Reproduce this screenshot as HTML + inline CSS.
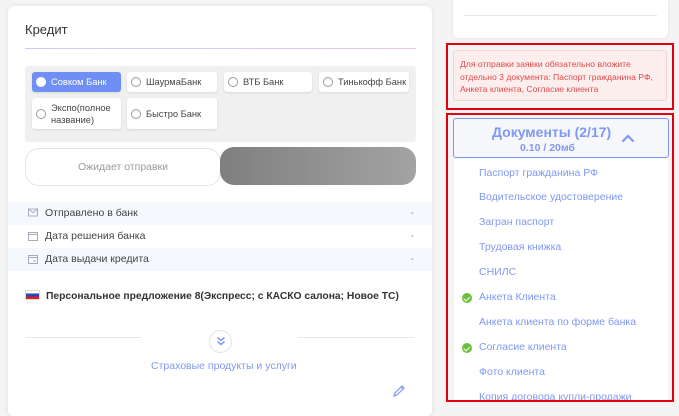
<!DOCTYPE html>
<html><head><meta charset="utf-8"><style>
*{box-sizing:border-box;margin:0;padding:0}
body{width:679px;height:404px;overflow:hidden;background:#f4f4f4;font-family:"Liberation Sans","DejaVu Sans",sans-serif;position:relative;color:#333}
.card{position:absolute;left:8px;top:6px;width:424px;height:410px;background:#fff;border-radius:6px;box-shadow:0 0 6px rgba(0,0,0,.08)}
.title{position:absolute;left:17px;top:16px;font-size:13px;color:#333}
.line{position:absolute;left:17px;top:42px;width:391px;height:1px;background:linear-gradient(90deg,#c8ccf8,#f0c8ef)}
.banks{position:absolute;left:17px;top:60px;width:391px;height:76px;background:#f0f0f0;border-radius:3px}
.b{position:absolute;height:20px;width:89px;background:#fff;border-radius:3px;box-shadow:0 1px 2px rgba(0,0,0,.1);font-size:9.3px;color:#444;display:flex;align-items:center;padding-left:4px;white-space:nowrap}
.b i{width:10px;height:10px;border:1px solid #999;border-radius:50%;margin-right:5px;flex:none;background:#fff}
.b.sel{background:#6f8ff5;color:#fff}.b.sel i{border-color:#fff}
.wait{position:absolute;left:17px;top:142px;width:196px;height:38px;border:1px solid #e4e4e4;border-radius:14px;font-size:10.5px;color:#9a9a9a;text-align:center;line-height:36px}
.grey{position:absolute;left:212px;top:141px;width:196px;height:38px;border-radius:14px;background:linear-gradient(90deg,#7f7f7f,#a3a3a3)}
.row{position:absolute;left:0;width:424px;height:23px;font-size:10.5px;color:#444;line-height:23px;padding-left:37px}
.row.s{background:#f5f9fd}
.row .d{position:absolute;right:18px;top:0;color:#999}
.row svg{position:absolute;left:20px;top:6px}
.offer{position:absolute;left:17px;top:284px;font-size:10.3px;font-weight:bold;color:#333}
.flag{display:inline-block;width:15px;height:10px;vertical-align:-1px;margin-right:6px;background:linear-gradient(#fff 0 33%,#2a46b0 33% 66%,#d32222 66%);border:1px solid #ddd}
.hr{position:absolute;top:331px;height:1px;background:#e6e6e6}
.circ{position:absolute;left:201px;top:324px;width:23px;height:23px;border:1px solid #e4e4e4;border-radius:50%;background:#fff}
.ins{position:absolute;left:143px;top:354px;font-size:10.5px;color:#7f98f3}
.top{position:absolute;left:453px;top:-6px;width:215px;height:44px;background:#fff;border-radius:6px;box-shadow:0 0 5px rgba(0,0,0,.08)}
.red1{position:absolute;left:446px;top:43px;width:228px;height:67px;border:2px solid #e0000e;background:#f4f4f4}
.warn{position:absolute;left:5px;top:5px;width:214px;height:51px;background:#fdeeee;border:1px solid #f6d4d4;border-radius:3px;font-size:8.6px;color:#e04a4a;line-height:12.5px;padding:7px 0 0 6px;white-space:nowrap}
.red2{position:absolute;left:446px;top:113px;width:228px;height:289px;border:2px solid #e0000e;background:#f4f4f4;overflow:hidden}
.dochead{position:absolute;left:5px;top:3px;width:216px;height:40px;border:1px solid #7f98f3;border-radius:3px;background:#f6f7fb;color:#7f98f3;font-weight:bold}
.list{position:absolute;left:6px;top:44px;width:214px;height:260px;background:#fff}
.it{position:absolute;left:25px;font-size:10.5px;color:#7f98f3;white-space:nowrap}
.ck{position:absolute;left:8px;width:10px;height:10px;border-radius:50%;background:#6cbf3a}
.ck:after{content:"";position:absolute;left:3px;top:1.5px;width:2.5px;height:4.5px;border:solid #fff;border-width:0 1.4px 1.4px 0;transform:rotate(45deg)}
</style></head><body>
<div class="card">
<div class="title">Кредит</div><div class="line"></div>
<div class="banks">
<div class="b sel" style="left:7px;top:6px"><i></i>Совком Банк</div>
<div class="b" style="left:102px;top:6px;width:90px"><i></i>ШаурмаБанк</div>
<div class="b" style="left:199px;top:6px;width:88px"><i></i>ВТБ Банк</div>
<div class="b" style="left:294px;top:6px;width:90px"><i></i>Тинькофф Банк</div>
<div class="b" style="left:7px;top:32px;height:31px;line-height:12px"><i></i>Экспо(полное<br>название)</div>
<div class="b" style="left:102px;top:32px;height:31px;width:90px"><i></i>Быстро Банк</div>
</div>
<div class="wait">Ожидает отправки</div><div class="grey"></div>
<div class="row s" style="top:196px"><svg width="10" height="9"><rect x=".5" y="1" width="9" height="7" fill="none" stroke="#aab" stroke-width="1"/><path d="M1 1.5l4 3 4-3" fill="none" stroke="#aab"/></svg>Отправлено в банк<span class="d">-</span></div>
<div class="row" style="top:219px"><svg width="10" height="10"><rect x=".5" y="1.5" width="9" height="8" fill="none" stroke="#aab"/><path d="M.5 3.5h9" stroke="#aab"/></svg>Дата решения банка<span class="d">-</span></div>
<div class="row s" style="top:242px"><svg width="10" height="10"><rect x=".5" y="1.5" width="9" height="8" fill="none" stroke="#aab"/><path d="M.5 3.5h9M5 7h3" stroke="#aab"/></svg>Дата выдачи кредита<span class="d">-</span></div>
<div class="offer"><span class="flag"></span>Персональное предложение 8(Экспресс; с КАСКО салона; Новое ТС)</div>
<div class="hr" style="left:18px;width:115px"></div><div class="hr" style="left:290px;width:116px"></div>
<div class="circ"><svg style="position:absolute;left:6px;top:5px" width="10" height="11"><path d="M1.5 1.5l3.5 3 3.5-3M1.5 5.5l3.5 3 3.5-3" fill="none" stroke="#6f8ff5" stroke-width="1.4"/></svg></div>
<div class="ins">Страховые продукты и услуги</div>
<svg style="position:absolute;left:384px;top:378px" width="14" height="14"><path d="M2 12l1-3 7-7 2 2-7 7z M9 3l2 2" fill="none" stroke="#7f98f3" stroke-width="1.2"/></svg>
</div>
<div class="top"><div style="position:absolute;left:11px;top:21px;width:193px;height:1px;background:#e6e6e6"></div></div>
<div class="red1"><div class="warn">Для отправки заявки обязательно вложите<br>отдельно 3 документа: Паспорт гражданина РФ,<br>Анкета клиента, Согласие клиента</div></div>
<div class="red2">
<div class="dochead"><div style="position:absolute;left:38px;top:5px;font-size:14px">Документы (2/17)</div><div style="position:absolute;left:66px;top:23px;font-size:10.5px">0.10 / 20мб</div>
<svg style="position:absolute;left:167px;top:15px" width="14" height="9"><path d="M1.5 7.5l5.5-5.5 5.5 5.5" fill="none" stroke="#7f98f3" stroke-width="2.2"/></svg></div>
<div class="list">
<div class="it" style="top:8px">Паспорт гражданина РФ</div>
<div class="it" style="top:32px">Водительское удостоверение</div>
<div class="it" style="top:57px">Загран паспорт</div>
<div class="it" style="top:82px">Трудовая книжка</div>
<div class="it" style="top:107px">СНИЛС</div>
<div class="ck" style="top:134px"></div><div class="it" style="top:132px">Анкета Клиента</div>
<div class="it" style="top:157px">Анкета клиента по форме банка</div>
<div class="ck" style="top:184px"></div><div class="it" style="top:182px">Согласие клиента</div>
<div class="it" style="top:207px">Фото клиента</div>
<div class="it" style="top:232px">Копия договора купли-продажи</div>
</div></div>
</body></html>
